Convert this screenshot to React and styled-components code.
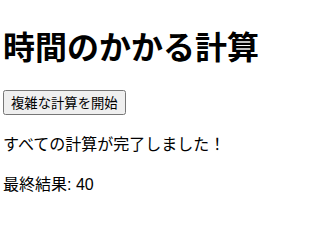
import React from "react";
import styled, { createGlobalStyle } from "styled-components";

const Global = createGlobalStyle`
  body {
    margin: 1px 3px;
    font-family: "Liberation Sans", "Noto Sans CJK JP", sans-serif;
    background: #fff;
    color: #000;
  }
`;

const Page = styled.div`
  display: block;
`;

const Title = styled.h1`
  font-size: 32px;
  margin: 21.44px 0;
  font-weight: bold;
`;

const StartButton = styled.button`
  font-family: "Liberation Sans", "Noto Sans CJK JP", sans-serif;
  font-size: 13.333px;
`;

const Text = styled.p`
  margin: 16px 0;
  font-size: 16px;
`;

export default function App() {
  return (
    <Page>
      <Global />
      <Title>時間のかかる計算</Title>
      <StartButton>複雑な計算を開始</StartButton>
      <Text>すべての計算が完了しました！</Text>
      <Text>最終結果: 40</Text>
    </Page>
  );
}
